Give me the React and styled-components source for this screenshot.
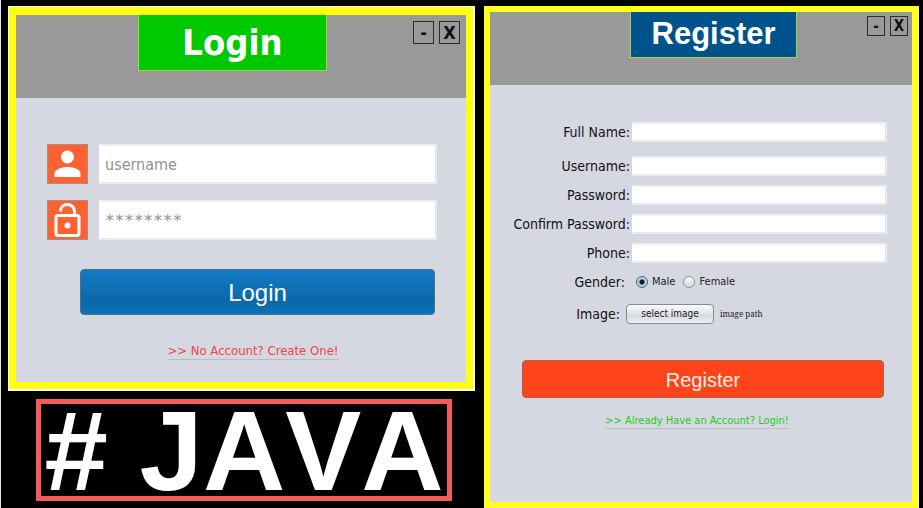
import React, { useState } from "react";
import styled, { createGlobalStyle } from "styled-components";

const UI = `"DejaVu Sans Condensed", "Noto Sans", sans-serif`;
const ARIAL = `"Liberation Sans", Arial, sans-serif`;

const GlobalStyle = createGlobalStyle`
  *, *::before, *::after { box-sizing: border-box; }
  body { margin: 0; background: #000; font-family: ${UI}; }
  button, input { font: inherit; margin: 0; }
`;

const Page = styled.main`
  display: grid;
  grid-template-columns: 467fr 435fr;
  gap: 9px;
  min-height: 100vh;
  padding: 6px 4px 0 7px;
  border-left: 1px solid #dfe6e6;
  background: #000;
`;

const Column = styled.div`
  display: flex;
  flex-direction: column;
  min-width: 0;
`;

const LoginWindow = styled.section`
  border: 1px solid #fffff0;
  border-right-width: 2px;
  border-bottom-width: 2px;
  background: #ffff10;
  padding: 8px 7px 7px;
`;

const RegisterWindow = styled.section`
  display: flex;
  flex-direction: column;
  background: #ffff20;
  border-right: 1px solid #f4f4c8;
  padding: 6px;
`;

const TitleBar = styled.header`
  display: grid;
  grid-template-columns: ${(p) => (p.$compact ? "140fr 166fr 115fr" : "122fr 188fr 139fr")};
  align-items: start;
  height: ${(p) => (p.$compact ? 73 : 83)}px;
  background: #999;
`;

const Title = styled.h1`
  grid-column: 2;
  margin: 0;
  height: ${(p) => (p.$compact ? 46 : 56)}px;
  border: 1px solid #9dd84a;
  border-top: 0;
  background: ${(p) => p.$color};
  color: #fff;
  font: bold ${(p) => (p.$compact ? 31 : 36)}px / ${(p) => (p.$compact ? 44 : 56)}px ${(p) => p.$font};
  text-align: center;
`;

const WindowControls = styled.div`
  display: flex;
  justify-content: flex-end;
  gap: 5px;
  padding: ${(p) => (p.$compact ? "4px 4px 0 0" : "6px 6px 0 0")};
`;

const ControlButton = styled.button`
  width: ${(p) => (p.$compact ? 18 : 21)}px;
  height: ${(p) => (p.$compact ? 20 : 23)}px;
  padding: 0;
  border: 1px solid #2c2c2c;
  background: transparent;
  color: #111;
  font: bold ${(p) => (p.$compact ? 15 : 18)}px / 18px ${UI};
`;

const LoginForm = styled.form`
  display: flex;
  flex-direction: column;
  padding: 46px 29px 22px 31px;
  background: #d6d8e1;
`;

const IconField = styled.label`
  display: flex;
  align-items: flex-start;
  gap: 11px;
  margin-bottom: 16px;
`;

const IconTile = styled.span`
  display: flex;
  flex: none;
  width: 41px;
  height: 40px;
  border: 1px solid #a8907f;
  background: #ff6232;
  svg { width: 100%; height: 100%; }
`;

const TextInput = styled.input`
  flex: 1;
  min-width: 0;
  width: 100%;
  height: ${(p) => (p.$compact ? 20 : 40)}px;
  padding: 0 5px;
  border: 1px solid #edebf1;
  border-left-color: #fff;
  border-radius: 0;
  background: #fff;
  box-shadow: inset -1px 0 #e2e1ea, inset 0 1px #efeff4, inset 0 -1px #e6e6ee;
  color: #333;
  font-size: ${(p) => (p.$compact ? 13 : 16)}px;
  outline: none;
  &::placeholder { color: #929292; opacity: 1; }
  &[type="password"]::placeholder { font-family: "DejaVu Sans Mono", monospace; }
`;

const PrimaryButton = styled.button`
  border: 1px solid ${(p) => p.$edge};
  border-radius: 4px;
  background: ${(p) => p.$fill};
  color: #fff;
`;

const LoginButton = styled(PrimaryButton)`
  height: 46px;
  margin: 13px 2px 0 33px;
  font: 24px / 44px ${ARIAL};
`;

const RegisterButton = styled(PrimaryButton)`
  height: 38px;
  margin: 36px 28px 0 32px;
  color: #fff0e8;
  font: 20px / 36px ${ARIAL};
`;

const SwitchLink = styled.a`
  align-self: center;
  border-bottom: 1px solid #b9bdc4;
  text-decoration: none;
  color: ${(p) => p.$color};
`;

const LoginLink = styled(SwitchLink)`
  margin: 28px 0 0 22px;
  font-size: 13px;
  line-height: 16px;
`;

const RegisterLink = styled(SwitchLink)`
  margin: 16px 8px 0 0;
  font-size: 11px;
  line-height: 14px;
`;

const Banner = styled.h2`
  margin: 8px 23px 6px 28px;
  height: 102px;
  border: 5px solid #f45c5c;
  background: #000;
  color: #fff;
  font: bold 114px / 94px ${ARIAL};
  font-kerning: none;
  text-align: center;
  white-space: nowrap;
`;

const RegisterForm = styled.form`
  flex: 1;
  display: flex;
  flex-direction: column;
  padding-top: 37px;
  background: #d6d8e1;
`;

const FormRow = styled.div`
  display: flex;
  align-items: center;
  height: 20px;
  margin-bottom: ${(p) => p.$after}px;
  padding-right: 25px;
`;

const RowLabel = styled.label`
  flex: none;
  width: ${(p) => p.$width}px;
  margin-right: ${(p) => p.$gap}px;
  text-align: right;
  color: #111;
  font-size: 14px;
  line-height: 20px;
  white-space: nowrap;
`;

const RadioLabel = styled.label`
  display: flex;
  align-items: center;
  gap: 4px;
  margin-right: 8px;
  color: #222;
  font-size: 11px;
  line-height: 14px;
`;

const Radio = styled.input`
  appearance: none;
  width: 12px;
  height: 12px;
  border: 1px solid ${(p) => (p.checked ? "#4d6580" : "#8b9097")};
  border-radius: 50%;
  background: ${(p) =>
    p.checked
      ? "radial-gradient(circle, #111a26 0 2px, #a9c1d8 3px, #c5d6e6 5px)"
      : "linear-gradient(#fafafc, #d8dae0)"};
`;

const FileButton = styled.button`
  width: 88px;
  height: 20px;
  padding: 0;
  border: 1px solid #858a94;
  border-radius: 4px;
  background: linear-gradient(#f8f9fb, #e2e4e9 50%, #d5d8df 55%, #eef0f4);
  color: #222;
  font-size: 10px;
  line-height: 16px;
`;

const FilePath = styled.span`
  margin-left: 6px;
  color: #222;
  font: 8px / 12px "Noto Serif", "DejaVu Serif", "Liberation Serif", serif;
`;

const PersonIcon = () => (
  <svg viewBox="0 0 39 38" aria-hidden="true">
    <circle cx="19.5" cy="12" r="6.5" fill="#fff" />
    <path d="M6.5 32v-3.500c0-4.500 8.500-6.500 13-6.500s13 2 13 6.500V32z" fill="#fff" />
  </svg>
);

const LockIcon = () => (
  <svg viewBox="0 0 39 38" aria-hidden="true" fill="none" stroke="#fff" strokeWidth="3">
    <rect x="8" y="14.500" width="23" height="20" rx="2" />
    <path d="M12.500 10.500C12.500 6 15.500 3.500 19.500 3.500S26.500 6.500 26.500 10.500V14" />
    <circle cx="19.500" cy="24.500" r="3" fill="#fff" stroke="none" />
  </svg>
);

const Controls = ({ compact }) => (
  <WindowControls $compact={compact}>
    <ControlButton $compact={compact} type="button" aria-label="Minimize">-</ControlButton>
    <ControlButton $compact={compact} type="button" aria-label="Close">X</ControlButton>
  </WindowControls>
);

const textFields = [
  { id: "fullName", label: "Full Name:", type: "text", after: 14 },
  { id: "username", label: "Username:", type: "text", after: 9 },
  { id: "password", label: "Password:", type: "password", after: 9 },
  { id: "confirm", label: "Confirm Password:", type: "password", after: 9 },
  { id: "phone", label: "Phone:", type: "tel", after: 9 },
];

export default function App() {
  const [gender, setGender] = useState("Male");
  const stop = (e) => e.preventDefault();

  return (
    <>
      <GlobalStyle />
      <Page>
        <Column>
          <LoginWindow>
            <TitleBar>
              <Title $color="#00c900" $font={UI}>Login</Title>
              <Controls />
            </TitleBar>
            <LoginForm onSubmit={stop}>
              <IconField>
                <IconTile><PersonIcon /></IconTile>
                <TextInput type="text" placeholder="username" aria-label="Username" />
              </IconField>
              <IconField>
                <IconTile><LockIcon /></IconTile>
                <TextInput type="password" placeholder="********" aria-label="Password" />
              </IconField>
              <LoginButton
                type="submit"
                $edge="#4d6f8c"
                $fill="linear-gradient(#137bc6, #0b68a8 72%, #0b74bd)"
              >
                Login
              </LoginButton>
              <LoginLink href="#register" $color="#f04444">
                &gt;&gt; No Account? Create One!
              </LoginLink>
            </LoginForm>
          </LoginWindow>
          <Banner># JAVA</Banner>
        </Column>

        <RegisterWindow>
          <TitleBar $compact>
            <Title $compact $color="#00528c" $font={ARIAL}>Register</Title>
            <Controls compact />
          </TitleBar>
          <RegisterForm onSubmit={stop}>
            {textFields.map((f) => (
              <FormRow key={f.id} $after={f.after}>
                <RowLabel htmlFor={f.id} $width={140} $gap={2}>{f.label}</RowLabel>
                <TextInput $compact id={f.id} type={f.type} />
              </FormRow>
            ))}
            <FormRow $after={12} role="radiogroup" aria-labelledby="gender">
              <RowLabel as="span" id="gender" $width={135} $gap={11}>Gender:</RowLabel>
              {["Male", "Female"].map((g) => (
                <RadioLabel key={g}>
                  <Radio
                    type="radio"
                    name="gender"
                    checked={gender === g}
                    onChange={() => setGender(g)}
                  />
                  {g}
                </RadioLabel>
              ))}
            </FormRow>
            <FormRow $after={0}>
              <RowLabel htmlFor="image" $width={130} $gap={6}>Image:</RowLabel>
              <FileButton id="image" type="button">select image</FileButton>
              <FilePath>image path</FilePath>
            </FormRow>
            <RegisterButton type="submit" $edge="#a06450" $fill="#ff441a">Register</RegisterButton>
            <RegisterLink href="#login" $color="#22cc22">
              &gt;&gt; Already Have an Account? Login!
            </RegisterLink>
          </RegisterForm>
        </RegisterWindow>
      </Page>
    </>
  );
}
